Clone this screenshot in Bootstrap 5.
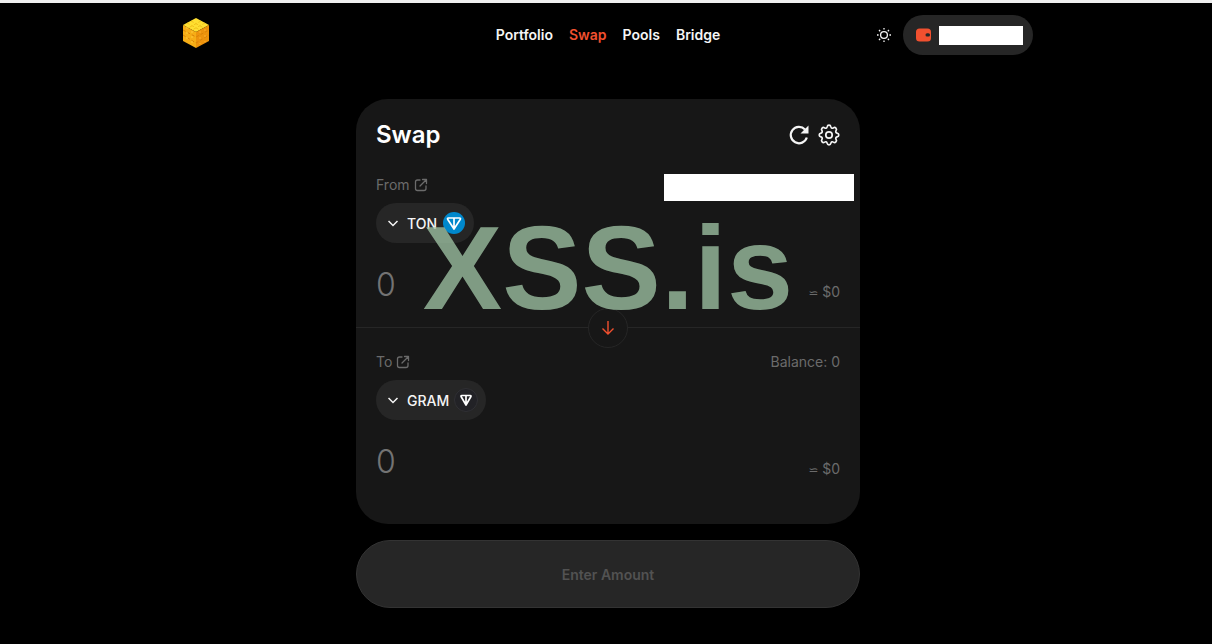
<!DOCTYPE html>
<html lang="en" data-bs-theme="dark">
<head>
<meta charset="utf-8">
<meta name="viewport" content="width=device-width, initial-scale=1">
<title>Swap</title>
<link href="https://cdn.jsdelivr.net/npm/bootstrap@5.3.0/dist/css/bootstrap.min.css" rel="stylesheet">
<style>
body{background:#000;color:#f5f5f5;font:400 14px/20px Inter,"Liberation Sans",sans-serif;border-top:3px solid #efefef;padding-left:4px}
.shell{max-width:850px;padding-top:12px}
.swap-col{max-width:504px}
.side{flex:1 1 0}
.main-nav{gap:16px;font-weight:600}
.main-nav .nav-link{padding:0;color:#f5f5f5}
.main-nav .nav-link.active{color:#f1502f}
.icon-btn{padding:0;border:0;line-height:1;color:#f5f5f5}
.wallet{height:40px;padding:0 10px 0 12px;background:#262626;gap:7px;border:0}
.wallet-mask{width:84px;height:19px;background:#fff}
.panel{background:#171717;border-radius:32px;margin-top:44px}
.panel h1{font-size:24px;line-height:32px;font-weight:600}
.muted,.muted a{color:#6b6b6b}
.leg{padding:24px 20px 19px}
.leg-to{padding-bottom:39px;border-top:1px solid #262626}
.token{height:40px;padding:0 8px 0 12px;background:#262626;color:#f5f5f5;border:0;font-size:14px;font-weight:500;gap:5px;margin-top:8px}
.amount-row{height:48px;margin-top:17px}
.amount{width:200px;min-width:0;height:48px;padding:0;border:0;background:none;color:#737373;font-size:32px;font-weight:300}
.amount::placeholder{color:#737373;opacity:1}
.usd{padding-bottom:5px}
.approx{font-family:"DejaVu Sans",sans-serif;font-size:12px}
.flip{width:40px;height:40px;top:0;left:50%;background:#171717;border:1px solid #262626;padding:0}
.balance-mask{right:6px;top:23px;width:190px;height:27px;background:#fff}
.submit{height:68px;margin-top:16px;font-size:14px;font-weight:600}
.submit:disabled{background:#262626;border:1px solid #333;color:#525252;opacity:1}
.watermark{left:0;right:0;top:109px;text-align:center;font:700 119px/120px "Liberation Sans",Arial,sans-serif;color:rgba(156,191,161,.79);pointer-events:none;z-index:3}
</style>
</head>
<body>
<header class="shell mx-auto d-flex align-items-center">
  <div class="side"><a href="#" aria-label="Home" class="d-inline-block">
    <svg class="d-block" width="26" height="30" viewBox="0 0 26 30"><path fill="#ffdf31" d="M13 0 26 7 13 14 0 7z"/><path fill="#f6ad16" d="M0 7l13 7v16L0 23z"/><path fill="#ed930c" d="M26 7v16l-13 7V14z"/><g fill="none" stroke-width="1"><path stroke="#f2c21c" d="M4 5l13 7M8 3l13 7M22 5 9 12M18 3 5 10" stroke-dasharray="3 2"/><path stroke="#d98208" d="M0 12l13 7 13-7M0 17l13 8 13-8" stroke-dasharray="3 2"/><path stroke="#ffcb3c" d="M4 9v15M9 13v14" stroke-dasharray="2 3"/><path stroke="#ffb02c" d="M17 13v13M22 11v13" stroke-dasharray="2 4"/></g></svg>
  </a></div>
  <nav class="nav main-nav" aria-label="Main">
    <a class="nav-link" href="#">Portfolio</a><a class="nav-link active" aria-current="page" href="#">Swap</a><a class="nav-link" href="#">Pools</a><a class="nav-link" href="#">Bridge</a>
  </nav>
  <div class="side d-flex justify-content-end align-items-center">
    <button class="btn icon-btn me-2 pe-1" aria-label="Theme"><svg class="d-block" width="14" height="14" viewBox="0 0 14 14" fill="none" stroke="currentColor" stroke-width="1.3"><circle cx="7" cy="7" r="3.4"/><path d="M7 0v1.6M7 12.4V14M0 7h1.6M12.4 7H14M2 2l1.2 1.2M10.8 10.8 12 12M12 2l-1.2 1.2M3.2 10.8 2 12"/></svg></button>
    <button class="btn rounded-pill wallet d-flex align-items-center" aria-label="Wallet"><svg width="17" height="14" viewBox="0 0 17 14"><path fill="#f1502f" d="M4.500.5h8Q16 .5 16 4v6q0 3.500-3.500 3.500h-8Q1 13.500 1 10V4Q1 .5 4.500.5z"/><rect x="10.500" y="5.200" width="4.500" height="3.300" rx="1.600" fill="#262626"/></svg><span class="wallet-mask"></span></button>
  </div>
</header>
<main class="swap-col mx-auto pb-4">
  <section class="panel position-relative">
    <div class="d-flex align-items-center justify-content-between px-3 mx-1 pt-3">
      <h1 class="mb-0 mt-1">Swap</h1>
      <div class="d-flex align-items-center gap-2 pt-1">
        <button class="btn icon-btn" aria-label="Refresh"><svg class="d-block" width="22" height="22" viewBox="0 0 22 22"><path d="M18.800 13.500A8.200 8.200 0 1 1 17 5.500" fill="none" stroke="currentColor" stroke-width="2.200"/><path d="M20.500 1.500v8h-8z" fill="currentColor"/></svg></button>
        <button class="btn icon-btn" aria-label="Settings"><svg class="d-block" width="22" height="22" viewBox="1 1 22 22" fill="none" stroke="currentColor" stroke-width="1.700" stroke-linejoin="round"><circle cx="12" cy="12" r="3.200"/><path d="M12 2.200c1 0 1.700.7 1.900 1.700.3 1.300 1.500 1.700 2.500 1 .9-.6 1.800-.5 2.500.2s.8 1.600.2 2.500c-.7 1-.3 2.200 1 2.500 1 .2 1.700.9 1.700 1.900s-.7 1.700-1.700 1.900c-1.300.3-1.700 1.500-1 2.500.6.9.5 1.800-.2 2.500s-1.600.8-2.500.2c-1-.7-2.200-.3-2.500 1-.2 1-.9 1.700-1.900 1.700s-1.700-.7-1.900-1.700c-.3-1.300-1.500-1.700-2.500-1-.9.6-1.800.5-2.500-.2s-.8-1.600-.2-2.500c.7-1 .3-2.200-1-2.500-1-.2-1.700-.9-1.700-1.900s.7-1.700 1.700-1.900c1.300-.3 1.700-1.500 1-2.500-.6-.9-.5-1.800.2-2.500s1.600-.8 2.500-.2c1 .7 2.200.3 2.500-1 .2-1 .9-1.700 1.900-1.700z"/></svg></button>
      </div>
    </div>
    <div class="leg position-relative">
      <div class="muted d-flex align-items-center"><label for="from">From</label><a href="#" class="ms-1" aria-label="Open TON details"><svg class="d-block" width="14" height="14" viewBox="0 0 14 14" fill="none" stroke="currentColor" stroke-width="1.300" stroke-linecap="round" stroke-linejoin="round"><path d="M6 2H3.500Q1.500 2 1.500 4v6.500q0 2 2 2H10q2 0 2-2V8M8.500 1.500h4v4M12.500 1.500 6 8"/></svg></a></div>
      <button class="btn rounded-pill token d-inline-flex align-items-center"><svg width="14" height="11" viewBox="0 0 14 11" fill="none" stroke="currentColor" stroke-width="1.500"><path d="M.5 3 5 7.500 9.500 3"/></svg>TON<svg width="24" height="24" viewBox="0 0 24 24"><circle cx="12" cy="12" r="11" fill="#0088cc"/><path d="M6.500 7h11q1.500 0 .7 1.500L12 18 5.800 8.500Q5 7 6.500 7zM12 7v10.500" fill="none" stroke="#fff" stroke-width="1.700" stroke-linejoin="round"/></svg></button>
      <div class="amount-row d-flex align-items-end justify-content-between"><input id="from" class="amount" placeholder="0" inputmode="decimal"><span class="usd muted"><span class="approx">⋍</span> $0</span></div>
      <span class="balance-mask position-absolute"></span>
    </div>
    <div class="leg leg-to position-relative">
      <button class="btn flip rounded-circle position-absolute translate-middle" aria-label="Switch tokens"><svg class="d-block mx-auto" width="16" height="16" viewBox="0 0 16 16" fill="none" stroke="#f1502f" stroke-width="1.400"><path d="M8 1v13M2.500 8.500 8 14l5.500-5.500"/></svg></button>
      <div class="muted d-flex align-items-center"><label for="to">To</label><a href="#" class="ms-1" aria-label="Open GRAM details"><svg class="d-block" width="14" height="14" viewBox="0 0 14 14" fill="none" stroke="currentColor" stroke-width="1.300" stroke-linecap="round" stroke-linejoin="round"><path d="M6 2H3.500Q1.500 2 1.500 4v6.500q0 2 2 2H10q2 0 2-2V8M8.500 1.500h4v4M12.500 1.500 6 8"/></svg></a><span class="ms-auto">Balance: 0</span></div>
      <button class="btn rounded-pill token d-inline-flex align-items-center"><svg width="14" height="11" viewBox="0 0 14 11" fill="none" stroke="currentColor" stroke-width="1.500"><path d="M.5 3 5 7.500 9.500 3"/></svg>GRAM<svg width="24" height="24" viewBox="0 0 24 24"><circle cx="12" cy="12" r="11.500" fill="#222226" stroke="#303034"/><path d="M7.800 7.500h8.400q1.300 0 .6 1.300L12 17 7.200 8.800q-.7-1.300.6-1.300zM12 7.500V16" fill="none" stroke="#fff" stroke-width="1.700" stroke-linejoin="round"/></svg></button>
      <div class="amount-row d-flex align-items-end justify-content-between"><input id="to" class="amount" placeholder="0" inputmode="decimal"><span class="usd muted"><span class="approx">⋍</span> $0</span></div>
    </div>
    <div class="watermark position-absolute">XSS.is</div>
  </section>
  <button class="btn submit rounded-pill w-100" disabled>Enter Amount</button>
</main>
<script src="https://cdn.jsdelivr.net/npm/bootstrap@5.3.0/dist/js/bootstrap.bundle.min.js"></script>
</body>
</html>
